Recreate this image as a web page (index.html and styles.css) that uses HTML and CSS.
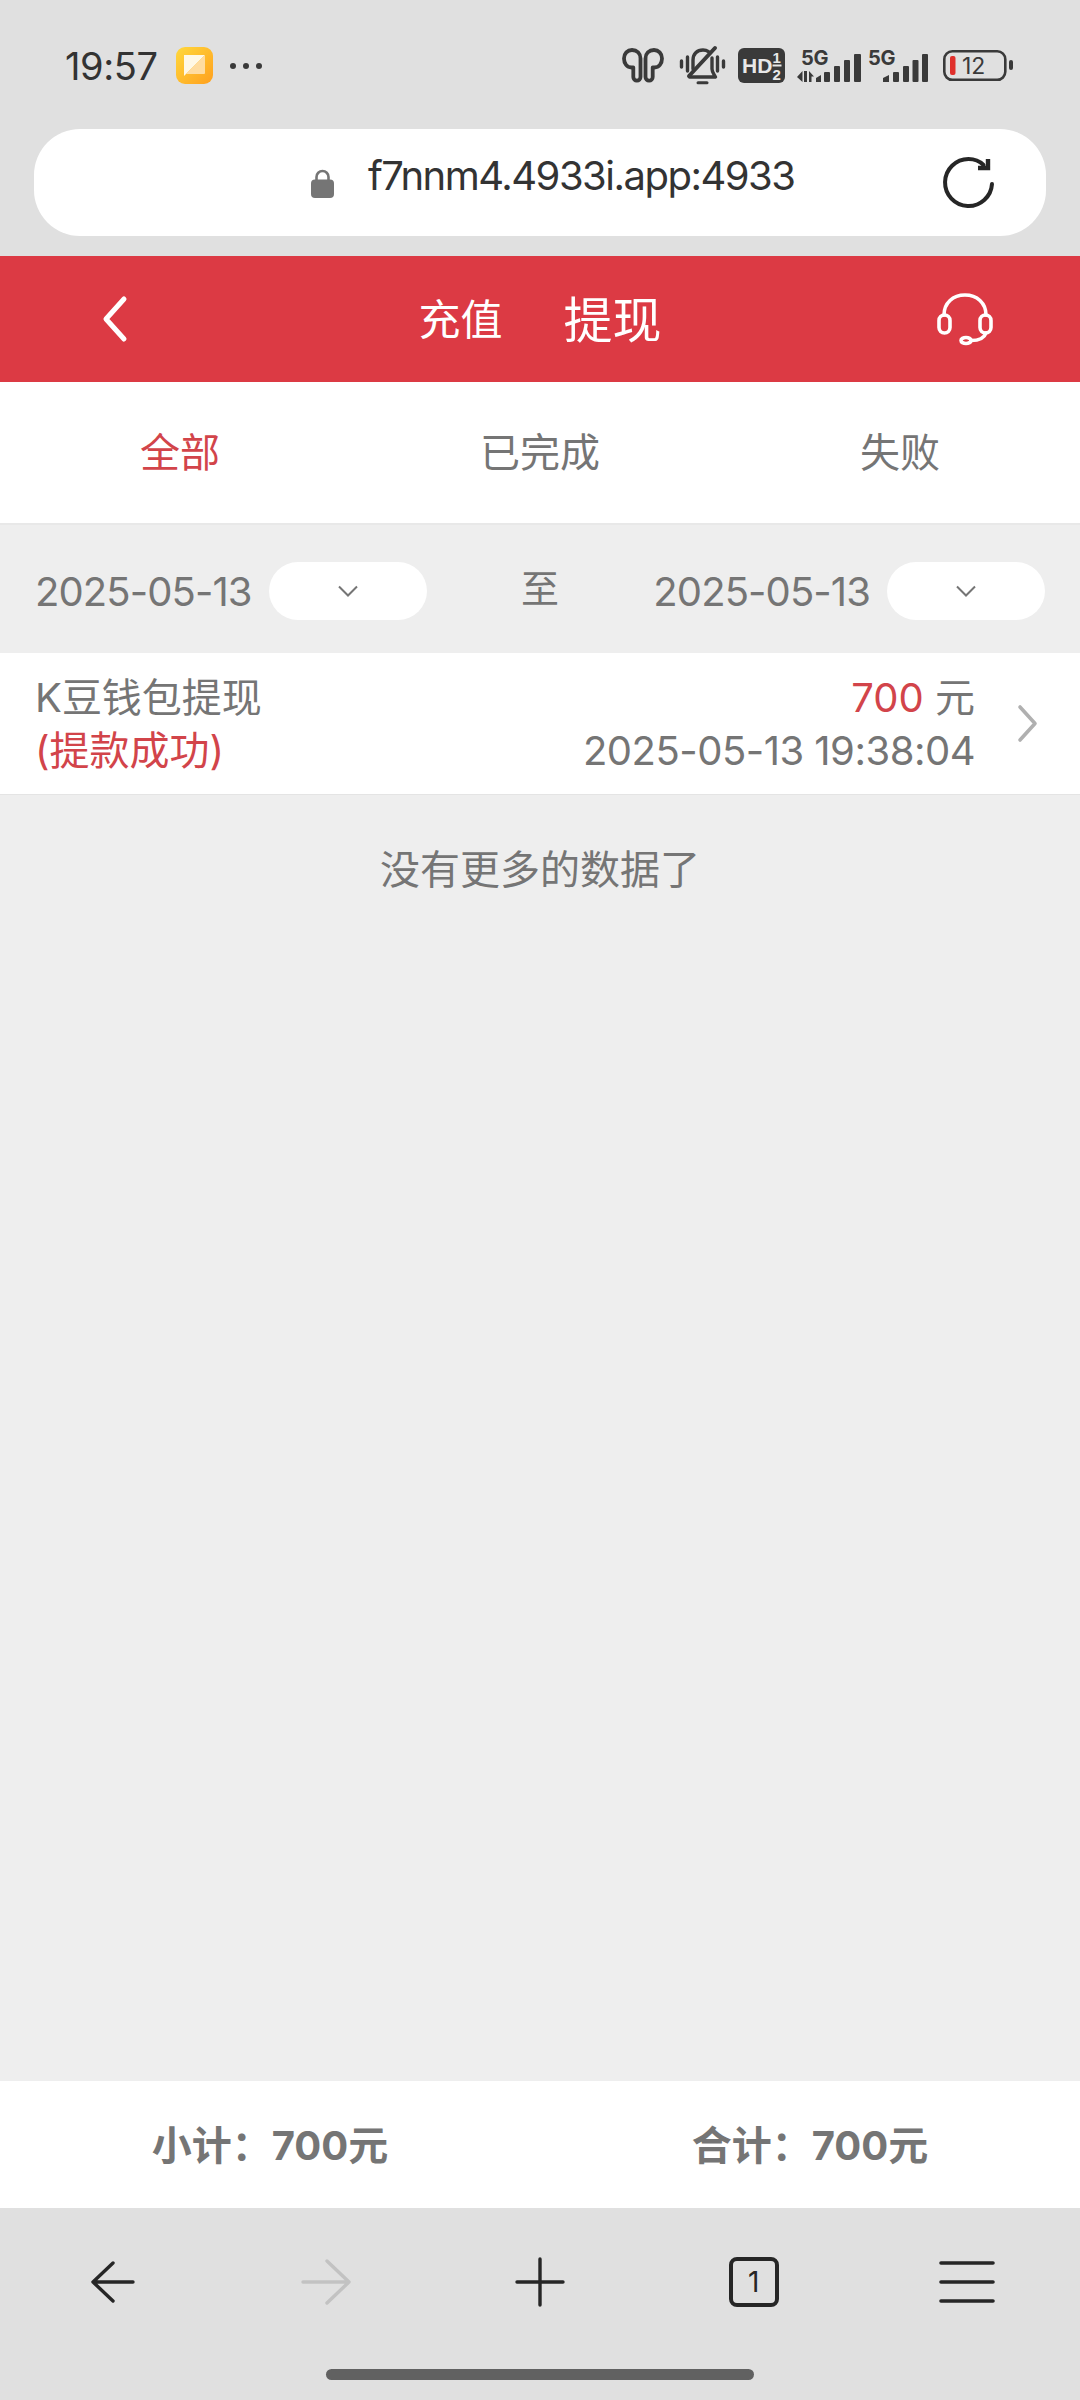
FILE: index.html
```html
<!DOCTYPE html>
<html lang="zh-CN">
<head>
<meta charset="utf-8">
<title>提现记录</title>
<link rel="stylesheet" href="styles.css">
</head>
<body>
<div class="screen">
  <div class="statusbar">
    <span class="time">19:57</span>
    <svg class="app-icon" viewBox="0 0 37 37">
      <defs><linearGradient id="ag" x1="0" y1="0" x2="1" y2="1"><stop offset="0" stop-color="#ffd83c"/><stop offset="1" stop-color="#ffa01e"/></linearGradient></defs>
      <rect width="37" height="37" rx="9" fill="url(#ag)"/>
      <path d="M8 8H29L8 29Z" fill="#fff8e6"/>
      <path d="M29 8V26a1 1 0 0 1-1 1H10Z" fill="#ffdca0"/>
    </svg>
    <span class="dots"><i></i><i></i><i></i></span>
    <div class="status-right">
      <svg class="ic-buds" viewBox="0 0 42 35" fill="none" stroke="#3a3a3a" stroke-width="3.800" stroke-linejoin="round">
        <path d="M9.500 19.500C5 19.500 2 15.500 2 10.500 2 5.500 5.500 2 10 2c5 0 8.500 3.500 8.500 8.500V29a3.600 3.600 0 0 1-7.200 0V19.500Z"/>
        <path d="M32.500 19.500C37 19.500 40 15.500 40 10.500 40 5.500 36.500 2 32 2c-5 0-8.500 3.500-8.500 8.500V29a3.600 3.600 0 0 0 7.200 0V19.500Z"/>
      </svg>
      <svg class="ic-bell" viewBox="0 0 45 39" fill="none" stroke="#3a3a3a" stroke-width="3.400" stroke-linecap="round" stroke-linejoin="round">
        <path d="M1.500 15v6M7.500 11v14M37.500 11v14M43.500 15v6"/>
        <path d="M13 23V14C13 8 17 4 23 4c2 0 4 .6 5.500 1.700M32 12v11c0 3 2 5 3.500 8H9.500"/>
        <path d="M9 30L35 2" stroke-width="4"/>
        <path d="M18 36.800h9" stroke-width="3"/>
      </svg>
      <svg class="ic-hd" viewBox="0 0 47 35">
        <rect width="47" height="35" rx="6" fill="#3a3a3a"/>
        <text x="4" y="24.500" class="hd-big">HD</text>
        <text x="34.500" y="15" class="hd-small">1</text>
        <text x="34.500" y="32" class="hd-small">2</text>
        <rect x="34.500" y="16.500" width="9" height="2" fill="#e8e8e8"/>
      </svg>
      <svg class="ic-sig1" viewBox="0 0 64 34" fill="#3a3a3a">
        <text x="4" y="15.500" class="fiveg">5G</text>
        <path d="M0 28l5.500-6v11zM7 22h3v11H7zM12 22l5 5.500h-2.500V33H12z"/>
        <path d="M19 29l5-3v7h-5z"/><rect x="27" y="23" width="6" height="10" rx="1"/><rect x="37" y="17" width="6" height="16" rx="1"/><rect x="47" y="11" width="6" height="22" rx="1"/><rect x="57" y="5" width="7" height="28" rx="1"/>
      </svg>
      <svg class="ic-sig2" viewBox="0 0 60 34" fill="#3a3a3a">
        <text x="0" y="15.500" class="fiveg">5G</text>
        <path d="M15 29l6-3v7h-6z"/><rect x="25" y="23" width="6" height="10" rx="1"/><rect x="35" y="17" width="6" height="16" rx="1"/><rect x="44.500" y="11" width="6" height="22" rx="1"/><rect x="54" y="5" width="6" height="28" rx="1"/>
      </svg>
      <svg class="ic-batt" viewBox="0 0 70 32">
        <rect x="1.300" y="1.300" width="61" height="28.500" rx="8" fill="none" stroke="#3a3a3a" stroke-width="2.600"/>
        <rect x="7" y="6" width="5.500" height="19" rx="2" fill="#e0302c"/>
        <text x="19" y="24" class="batt-num">12</text>
        <rect x="66" y="10" width="4" height="10" rx="2" fill="#3a3a3a"/>
      </svg>
    </div>
  </div>

  <div class="urlbar">
    <div class="url-center">
      <svg class="lock" viewBox="0 0 23 29"><path d="M5.500 12V8a6 6 0 0 1 12 0v4" fill="none" stroke="#757575" stroke-width="2.600"/><rect y="10.500" width="23" height="18.500" rx="4" fill="#757575"/></svg>
      <span class="url">f7nnm4.4933i.app:4933</span>
    </div>
    <svg class="reload" viewBox="0 0 51 51" fill="none" stroke="#262626" stroke-width="4" stroke-linecap="round"><path d="M49 27A23.500 23.500 0 1 1 25.500 2c5.500 0 11 2 15 6"/><path d="M45 2v9H35" stroke-linecap="butt" stroke-width="4.400"/></svg>
  </div>

  <header class="topbar">
    <svg class="tb-back" viewBox="0 0 24 46" fill="none" stroke="#fff" stroke-width="5" stroke-linecap="round" stroke-linejoin="round"><path d="M21 3L3 23l18 20"/></svg>
    <div class="tb-titles"><span class="tb-a">充值</span><span class="tb-b">提现</span></div>
    <svg class="tb-head" viewBox="0 0 56 52" fill="none" stroke="#fff" stroke-width="3.600" stroke-linecap="round"><path d="M7 22C7 10 16 2 28 2s21 8 21 20"/><rect x="2" y="22" width="11" height="18" rx="5.500"/><rect x="43" y="22" width="11" height="18" rx="5.500"/><path d="M49 40c-2 6-9 7.500-15 7.500"/><ellipse cx="29" cy="47.500" rx="5" ry="3"/></svg>
  </header>

  <nav class="tabs">
    <span class="tab tab-on">全部</span>
    <span class="tab">已完成</span>
    <span class="tab">失败</span>
  </nav>

  <main class="content">
    <div class="filter">
      <div class="date-group">
        <span class="date">2025-05-13</span>
        <span class="pill"><svg class="pill-chev" viewBox="0 0 20 12" fill="none" stroke="#757575" stroke-width="2"><path d="M1 1.500l9 9 9-9"/></svg></span>
      </div>
      <span class="to">至</span>
      <div class="date-group">
        <span class="date">2025-05-13</span>
        <span class="pill"><svg class="pill-chev" viewBox="0 0 20 12" fill="none" stroke="#757575" stroke-width="2"><path d="M1 1.500l9 9 9-9"/></svg></span>
      </div>
    </div>

    <div class="record">
      <div class="rec-left">
        <div class="rec-line">K豆钱包提现</div>
        <div class="rec-line red">(提款成功)</div>
      </div>
      <div class="rec-right">
        <div class="rec-line"><span class="red">700</span> 元</div>
        <div class="rec-line rec-time">2025-05-13 19:38:04</div>
      </div>
      <svg class="rec-chev" viewBox="0 0 19 37" fill="none" stroke="#b0b0b0" stroke-width="3.600" stroke-linecap="round" stroke-linejoin="round"><path d="M2 2l15 16.500L2 35"/></svg>
    </div>

    <p class="nomore">没有更多的数据了</p>
  </main>

  <div class="totals">
    <span class="total">小计：700元</span>
    <span class="total">合计：700元</span>
  </div>

  <div class="browser-nav">
    <div class="nav-row">
      <span class="nav-item"><svg class="n-back" viewBox="0 0 44 42" fill="none" stroke="#262626" stroke-width="3.400" stroke-linecap="round" stroke-linejoin="round"><path d="M22 2L2 21l20 19M2 21h40"/></svg></span>
      <span class="nav-item"><svg class="n-fwd" viewBox="0 0 50 46" fill="none" stroke="#c2c2c2" stroke-width="3.400" stroke-linecap="round" stroke-linejoin="round"><path d="M26 2l22 21-22 21M2 23h46"/></svg></span>
      <span class="nav-item"><svg class="n-plus" viewBox="0 0 50 50" fill="none" stroke="#262626" stroke-width="3.400" stroke-linecap="round"><path d="M25 2v46M2 25h46"/></svg></span>
      <span class="nav-item"><span class="n-tab">1</span></span>
      <span class="nav-item"><svg class="n-menu" viewBox="0 0 56 42" fill="none" stroke="#262626" stroke-width="3.600" stroke-linecap="round"><path d="M2 2h52M2 21h52M2 40h52"/></svg></span>
    </div>
    <div class="home-bar"></div>
  </div>
</div>
</body>
</html>
```
FILE: styles.css
```css
* { box-sizing: border-box; }
html, body { margin: 0; padding: 0; }
body {
  width: 1080px;
  height: 2400px;
  overflow: hidden;
  font-family: Inter, "Noto Sans CJK SC", sans-serif;
  color: #757575;
  background: #e0e0e0;
}
.screen { display: flex; flex-direction: column; height: 2400px; }
svg { overflow: visible; }

/* status bar */
.statusbar {
  height: 129px;
  flex: none;
  display: flex;
  align-items: center;
  padding: 2px 67px 0 65px;
}
.time { font-size: 38px; color: #333; letter-spacing: -0.4px; width: 111px; }
.app-icon { width: 37px; height: 37px; flex: none; }
.dots { display: flex; gap: 7px; margin-left: 17px; }
.dots i { width: 6px; height: 6px; border-radius: 50%; background: #3a3a3a; }
.status-right { margin-left: auto; display: flex; align-items: center; }
.ic-buds { width: 42px; height: 35px; margin-right: 16px; }
.ic-bell { width: 45px; height: 39px; margin-right: 13px; }
.ic-hd { width: 47px; height: 35px; margin-right: 12px; }
.ic-sig1 { width: 64px; height: 34px; margin-right: 7px; }
.ic-sig2 { width: 60px; height: 34px; margin-right: 15px; }
.ic-batt { width: 70px; height: 32px; }
.hd-big { font: 700 21px "Liberation Sans", sans-serif; fill: #e8e8e8; }
.hd-small { font: 700 15px "Liberation Sans", sans-serif; fill: #e8e8e8; }
.fiveg { font: 700 20px Inter, sans-serif; fill: #3a3a3a; letter-spacing: -0.3px; }
.batt-num { font: 400 23px Inter, sans-serif; fill: #3a3a3a; }

/* url bar */
.urlbar {
  flex: none;
  height: 107px;
  margin: 0 34px 20px 34px;
  background: #fff;
  border-radius: 46px;
  display: flex;
  align-items: center;
  justify-content: space-between;
  padding-right: 52px;
}
.url-center { display: flex; align-items: center; margin-left: 277px; }
.lock { width: 23px; height: 29px; margin: 2px 34px 0 0; }
.url { font-size: 40px; letter-spacing: -1.5px; color: #333; line-height: 1; margin-top: -13px; }
.reload { width: 51px; height: 51px; }

/* red header */
.topbar {
  flex: none;
  height: 126px;
  background: #dc3a44;
  display: flex;
  align-items: center;
  justify-content: space-between;
  padding: 0 87px 0 103px;
  color: #fff;
}
.tb-back { width: 24px; height: 46px; }
.tb-titles { display: flex; align-items: center; gap: 61px; margin: 0 0 6px 16px; }
.tb-a { font-size: 42px; }
.tb-b { font-size: 49px; }
.tb-head { width: 56px; height: 52px; }

/* tabs */
.tabs {
  flex: none;
  height: 143px;
  padding-bottom: 6px;
  background: #fff;
  display: grid;
  grid-template-columns: repeat(3, 1fr);
  align-items: center;
  justify-items: center;
  border-bottom: 2px solid #e8e8e8;
  font-size: 40px;
}
.tab-on { color: #d2444a; }

/* content */
.content { flex: 1; background: #eeeeee; display: flex; flex-direction: column; }
.filter {
  flex: none;
  height: 128px;
  display: flex;
  align-items: center;
  justify-content: space-between;
  padding: 4px 35px 0 35px;
}
.date-group { display: flex; align-items: center; gap: 17px; }
.date { font-size: 40px; letter-spacing: -0.9px; }
.to { font-size: 38px; margin-bottom: 12px; }
.pill {
  width: 158px;
  height: 58px;
  border-radius: 29px;
  background: #fff;
  display: flex;
  align-items: center;
  justify-content: center;
}
.pill-chev { width: 20px; height: 12px; }

.record {
  flex: none;
  height: 142px;
  background: #fff;
  border-bottom: 1px solid #e4e4e4;
  display: flex;
  align-items: center;
  padding: 0 43px 0 35px;
}
.rec-left { flex: 1; }
.rec-right { text-align: right; }
.rec-line { font-size: 40px; line-height: 53px; }
.rec-time { letter-spacing: -0.5px; }
.red { color: #d2444a; }
.rec-chev { width: 19px; height: 37px; margin-left: 43px; }

.nomore { margin: 45px 0 0; text-align: center; font-size: 40px; line-height: 60px; }

/* totals */
.totals {
  flex: none;
  height: 127px;
  padding-bottom: 3px;
  background: #fff;
  display: grid;
  grid-template-columns: 1fr 1fr;
  align-items: center;
  justify-items: center;
  font-size: 40px;
  font-weight: 700;
}

/* browser nav */
.browser-nav { flex: none; height: 192px; background: #e0e0e0; position: relative; }
.nav-row {
  display: grid;
  grid-template-columns: repeat(5, 1fr);
  padding: 49px 6px 0;
  height: 100px;
}
.nav-item { display: flex; justify-content: center; align-items: flex-start; }
.n-back { width: 44px; height: 42px; margin-top: 4px; }
.n-fwd { width: 50px; height: 46px; margin-top: 2px; }
.n-plus { width: 50px; height: 50px; }
.n-tab {
  width: 50px;
  height: 50px;
  border: 4px solid #262626;
  border-radius: 8px;
  display: flex;
  align-items: center;
  justify-content: center;
  font-size: 28px;
  color: #262626;
}
.n-menu { width: 56px; height: 42px; margin-top: 4px; }
.home-bar {
  position: absolute;
  left: 326px;
  top: 161px;
  width: 428px;
  height: 11px;
  border-radius: 6px;
  background: #616161;
}
```
